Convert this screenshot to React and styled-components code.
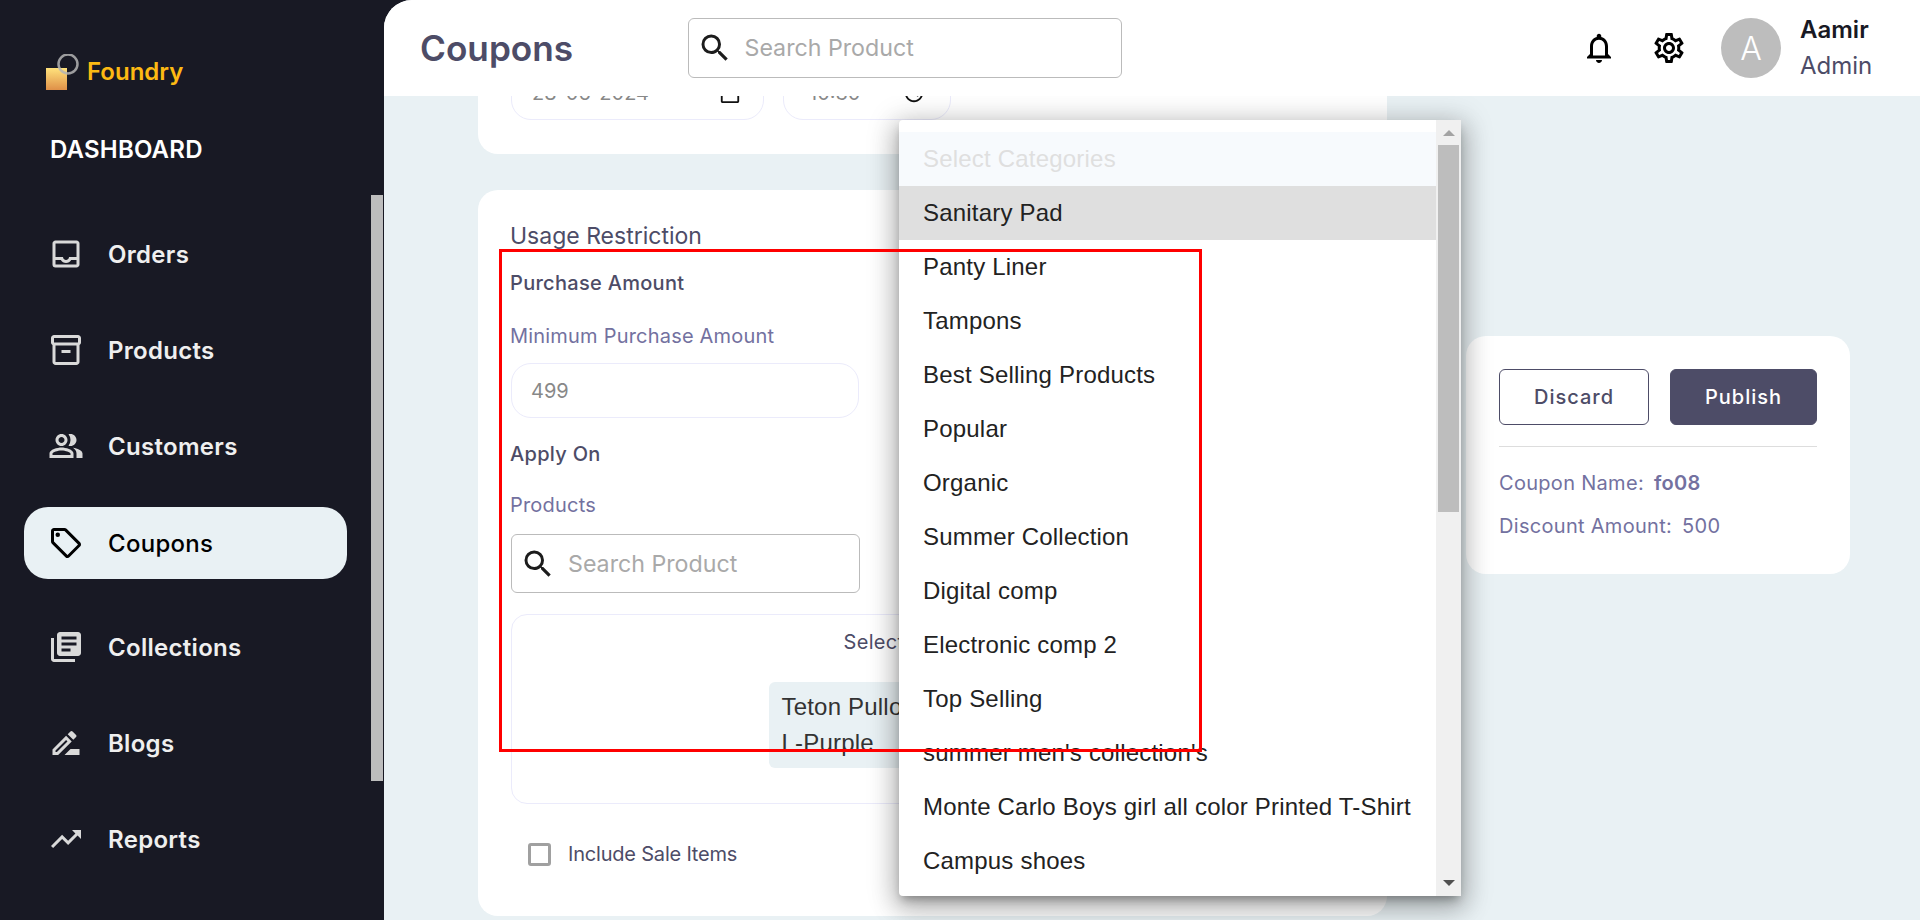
import React from 'react'
import styled, { createGlobalStyle } from 'styled-components'
import {
  MdOutlineInbox,
  MdOutlineInventory2,
  MdOutlinePeopleAlt,
  MdOutlineLocalOffer,
  MdLibraryBooks,
  MdOutlineDriveFileRenameOutline,
  MdTrendingUp,
  MdSearch,
  MdOutlineNotifications,
  MdOutlineSettings,
  MdOutlineCalendarToday,
  MdOutlineAccessTime,
} from 'react-icons/md'

const GlobalStyle = createGlobalStyle`
  html, body { margin: 0; padding: 0; height: 100%; overflow: hidden; background: #181924; }
  * { box-sizing: border-box; }
  body { font-family: Inter, "Noto Sans", sans-serif; }
`

const navItems = [
  { label: 'Orders', Icon: MdOutlineInbox },
  { label: 'Products', Icon: MdOutlineInventory2 },
  { label: 'Customers', Icon: MdOutlinePeopleAlt },
  { label: 'Coupons', Icon: MdOutlineLocalOffer, active: true },
  { label: 'Collections', Icon: MdLibraryBooks },
  { label: 'Blogs', Icon: MdOutlineDriveFileRenameOutline },
  { label: 'Reports', Icon: MdTrendingUp },
]

const categories = [
  'Sanitary Pad',
  'Panty Liner',
  'Tampons',
  'Best Selling Products',
  'Popular',
  'Organic',
  'Summer Collection',
  'Digital comp',
  'Electronic comp 2',
  'Top Selling',
  "summer men's collection's",
  'Monte Carlo Boys girl all color Printed T-Shirt',
  'Campus shoes',
]

function Logo() {
  return (
    <svg width="36" height="36" viewBox="0 0 36 36">
      <defs>
        <linearGradient id="logoFill" x1="0" y1="0" x2="0" y2="1">
          <stop offset="0" stopColor="#ffe27c" />
          <stop offset="1" stopColor="#df9048" />
        </linearGradient>
      </defs>
      <rect x="0" y="14" width="21" height="22" fill="url(#logoFill)" />
      <circle cx="22" cy="10" r="9.5" fill="none" stroke="#b4b4b4" strokeOpacity="0.85" strokeWidth="2.5" />
    </svg>
  )
}

export default function App() {
  return (
    <Page>
      <GlobalStyle />
      <Sidebar>
        <Brand>
          <Logo />
          <BrandName>Foundry</BrandName>
        </Brand>
        <SectionTitle>DASHBOARD</SectionTitle>
        <Nav>
          {navItems.map(({ label, Icon, active }) => (
            <NavItem key={label} $active={active}>
              <Icon size={36} />
              <span>{label}</span>
            </NavItem>
          ))}
        </Nav>
        <SideThumb />
      </Sidebar>

      <Main>
        <Header>
          <PageTitle>Coupons</PageTitle>
          <SearchBox $width={434} $height={60}>
            <MdSearch size={36} color="#1c1c1c" />
            <input placeholder="Search Product" />
          </SearchBox>
          <HeaderRight>
            <IconBtn><MdOutlineNotifications size={36} /></IconBtn>
            <IconBtn><MdOutlineSettings size={36} /></IconBtn>
            <Avatar>A</Avatar>
            <UserInfo>
              <UserName>Aamir</UserName>
              <UserRole>Admin</UserRole>
            </UserInfo>
          </HeaderRight>
        </Header>

        <Body>
          <FormColumn>
            <ScheduleCard>
              <DateField $width={253} $padLeft={20} $padRight={22}>
                <span>28-06-2024</span>
                <MdOutlineCalendarToday size={22} color="#111" />
              </DateField>
              <DateField $width={168} $padLeft={25} $padRight={25}>
                <span>10:30</span>
                <MdOutlineAccessTime size={22} color="#111" />
              </DateField>
            </ScheduleCard>

            <UsageCard>
              <CardTitle>Usage Restriction</CardTitle>
              <GroupTitle $top={20}>Purchase Amount</GroupTitle>
              <FieldLabel $top={29}>Minimum Purchase Amount</FieldLabel>
              <AmountInput readOnly value="499" />
              <GroupTitle $top={24}>Apply On</GroupTitle>
              <FieldLabel $top={27}>Products</FieldLabel>
              <SearchBox $width={349} $height={59} $top={17}>
                <MdSearch size={36} color="#1c1c1c" />
                <input placeholder="Search Product" />
              </SearchBox>
              <SelectedBox>
                <SelectedTitle>Selected Products</SelectedTitle>
                <Chip>Teton Pullover Hoodie<br />L-Purple</Chip>
              </SelectedBox>
              <CheckRow>
                <CheckBox />
                <span>Include Sale Items</span>
              </CheckRow>
            </UsageCard>
          </FormColumn>

          <SummaryCard>
            <ButtonRow>
              <OutlineBtn>Discard</OutlineBtn>
              <SolidBtn>Publish</SolidBtn>
            </ButtonRow>
            <Divider />
            <SummaryLine $top={24}>Coupon Name: <b>fo08</b></SummaryLine>
            <SummaryLine $top={19}>Discount Amount: <span>500</span></SummaryLine>
          </SummaryCard>
        </Body>
      </Main>

      <Dropdown>
        <OptionList>
          <Option $placeholder>Select Categories</Option>
          {categories.map((c, i) => (
            <Option key={c} $selected={i === 0}>{c}</Option>
          ))}
        </OptionList>
        <ListScroll>
          <ArrowUp />
          <ListThumb />
          <ArrowDown />
        </ListScroll>
      </Dropdown>

      <Highlight />
    </Page>
  )
}

const Page = styled.div`
  position: relative;
  display: flex;
  width: 1920px;
  height: 920px;
  overflow: hidden;
  background: #181924;
`

const Sidebar = styled.aside`
  position: relative;
  flex: 0 0 384px;
  padding: 54px 0 0 24px;
`

const Brand = styled.div`
  display: flex;
  align-items: center;
  gap: 5px;
  margin-left: 22px;
  height: 36px;
`

const BrandName = styled.div`
  padding-bottom: 2px;
  font-size: 24px;
  font-weight: 600;
  color: #fdb913;
`

const SectionTitle = styled.div`
  margin: 45px 0 0 26px;
  font-size: 24px;
  line-height: 30px;
  font-weight: 600;
  letter-spacing: 0.2px;
  color: #fff;
`

const Nav = styled.nav`
  display: flex;
  flex-direction: column;
  gap: 24px;
  margin-top: 53px;
`

const NavItem = styled.a`
  display: flex;
  align-items: center;
  gap: 24px;
  width: 323px;
  height: 72px;
  padding-left: 24px;
  border-radius: 24px;
  font-size: 24px;
  letter-spacing: 0.3px;
  font-weight: ${(p) => (p.$active ? 500 : 600)};
  background: ${(p) => (p.$active ? '#e9f1f4' : 'transparent')};
  color: ${(p) => (p.$active ? '#000' : '#efefef')};
  margin: ${(p) => (p.$active ? '1px 0 8px' : '0')};
  svg { color: ${(p) => (p.$active ? '#000' : '#d9d9d9')}; flex: none; }
`

const SideThumb = styled.div`
  position: absolute;
  left: 371px;
  top: 195px;
  width: 12px;
  height: 586px;
  background: #bdbdbd;
`

const Main = styled.main`
  flex: 1;
  display: flex;
  flex-direction: column;
  min-width: 0;
  background: #e9f1f4;
  border-top-left-radius: 28px;
  overflow: hidden;
`

const Header = styled.header`
  flex: 0 0 96px;
  display: flex;
  align-items: center;
  padding: 0 49px 0 36px;
  background: #fff;
  position: relative;
  z-index: 1;
`

const PageTitle = styled.h1`
  width: 267.5px;
  margin: 0;
  font-size: 35.2px;
  font-weight: 600;
  color: #4d4c67;
`

const SearchBox = styled.label`
  display: flex;
  align-items: center;
  gap: 10px;
  width: ${(p) => p.$width}px;
  height: ${(p) => p.$height}px;
  margin-top: ${(p) => p.$top || 0}px;
  padding-left: 8px;
  border: 1px solid #bbbbbb;
  border-radius: 6px;
  background: #fff;
  svg { flex: none; }
  input {
    flex: 1;
    min-width: 0;
    border: 0;
    outline: 0;
    background: transparent;
    font-family: inherit;
    font-size: 23.2px;
    color: #333;
  }
  input::placeholder { color: #a9a9a9; opacity: 1; }
`

const HeaderRight = styled.div`
  margin-left: auto;
  display: flex;
  align-items: center;
  gap: 34px;
`

const IconBtn = styled.div`
  display: flex;
  width: 36px;
  height: 36px;
  color: #000;
`

const Avatar = styled.div`
  display: flex;
  align-items: center;
  justify-content: center;
  width: 60px;
  height: 60px;
  border-radius: 50%;
  background: #bdbdbd;
  color: #fff;
  font-size: 32px;
  font-weight: 300;
`

const UserInfo = styled.div`
  width: 71px;
  margin-left: -15px;
`

const UserName = styled.div`
  font-size: 24px;
  line-height: 36px;
  font-weight: 600;
  color: #181924;
`

const UserRole = styled.div`
  font-size: 24px;
  line-height: 36px;
  color: #4d4c67;
`

const Body = styled.div`
  flex: 1;
  display: flex;
  align-items: flex-start;
  padding-left: 94px;
  min-height: 0;
`

const FormColumn = styled.div`
  flex: 0 0 909px;
  margin-top: -51px;
`

const ScheduleCard = styled.section`
  display: flex;
  gap: 19px;
  padding: 20px 33px 34px;
  background: #fff;
  border-radius: 20px;
`

const DateField = styled.div`
  display: flex;
  align-items: center;
  justify-content: space-between;
  width: ${(p) => p.$width}px;
  height: 55px;
  padding: 0 ${(p) => p.$padRight}px 0 ${(p) => p.$padLeft}px;
  border: 1px solid #ebebfb;
  border-radius: 20px;
  font-size: 20px;
  color: #888;
`

const UsageCard = styled.section`
  margin-top: 36px;
  padding: 31px 33px 50px;
  background: #fff;
  border-radius: 20px;
`

const CardTitle = styled.div`
  margin-left: -1px;
  font-size: 23px;
  line-height: 30px;
  color: #4d4c67;
`

const GroupTitle = styled.div`
  margin: ${(p) => p.$top}px 0 0 -1px;
  font-size: 20px;
  line-height: 24px;
  font-weight: 500;
  letter-spacing: 0.3px;
  color: #4d4c67;
`

const FieldLabel = styled.div`
  margin: ${(p) => p.$top}px 0 0 -1px;
  font-size: 20px;
  line-height: 24px;
  letter-spacing: 0.2px;
  color: #7371a0;
`

const AmountInput = styled.input`
  display: block;
  width: 348px;
  height: 55px;
  margin-top: 15px;
  padding: 0 19px;
  border: 1px solid #ebebfb;
  border-radius: 20px;
  outline: 0;
  font-family: inherit;
  font-size: 20px;
  color: #888;
`

const SelectedBox = styled.div`
  display: flex;
  flex-direction: column;
  align-items: center;
  height: 190px;
  margin-top: 21px;
  padding-top: 15px;
  border: 1px solid #ebebfb;
  border-radius: 16px;
`

const SelectedTitle = styled.div`
  font-size: 20px;
  line-height: 24px;
  letter-spacing: 0.3px;
  color: #4d4c67;
`

const Chip = styled.div`
  width: 328px;
  margin-top: 28px;
  padding: 7px 13px;
  background: #e9f1f4;
  border-radius: 6px;
  font-family: "Liberation Sans", Arial, sans-serif;
  font-size: 24px;
  line-height: 36px;
  letter-spacing: 0.2px;
  color: #333;
`

const CheckRow = styled.label`
  display: flex;
  align-items: center;
  gap: 17px;
  margin-top: 39px;
  padding-left: 17px;
  font-size: 20px;
  line-height: 23px;
  letter-spacing: -0.2px;
  color: #4d4c67;
`

const CheckBox = styled.div`
  width: 23px;
  height: 23px;
  border: 3px solid #a0a0a0;
  border-radius: 3px;
`

const SummaryCard = styled.aside`
  width: 384px;
  margin: 240px 0 0 79px;
  padding: 33px 33px 36px;
  background: #fff;
  border-radius: 20px;
`

const ButtonRow = styled.div`
  display: flex;
  justify-content: space-between;
`

const OutlineBtn = styled.button`
  width: 150px;
  height: 56px;
  border: 1px solid #4d4c67;
  border-radius: 6px;
  background: #fff;
  font-family: inherit;
  font-size: 20px;
  font-weight: 500;
  letter-spacing: 1px;
  color: #4d4c67;
`

const SolidBtn = styled(OutlineBtn)`
  width: 147px;
  background: #4d4c67;
  color: #fff;
`

const Divider = styled.div`
  height: 1px;
  margin-top: 21px;
  background: #dddddd;
`

const SummaryLine = styled.div`
  margin-top: ${(p) => p.$top}px;
  font-size: 20px;
  line-height: 24px;
  letter-spacing: 0.3px;
  color: #7371a0;
  b, span { margin-left: 4px; }
  b { font-weight: 600; }
`

const Dropdown = styled.div`
  position: absolute;
  left: 899px;
  top: 120px;
  width: 562px;
  height: 776px;
  display: flex;
  background: #fff;
  border-radius: 4px 0 0 4px;
  box-shadow: 0 6px 10px -3px rgba(0, 0, 0, 0.3), 0 10px 24px 3px rgba(0, 0, 0, 0.22), 0 4px 30px 6px rgba(0, 0, 0, 0.14);
  font-family: "Liberation Sans", Arial, sans-serif;
`

const OptionList = styled.div`
  flex: 1;
  min-width: 0;
  padding-top: 12px;
`

const Option = styled.div`
  height: 54px;
  padding-left: 24px;
  font-size: 24px;
  line-height: 54px;
  letter-spacing: 0.2px;
  white-space: nowrap;
  color: ${(p) => (p.$placeholder ? '#dfdfdf' : '#222')};
  background: ${(p) => (p.$selected ? '#dfdfdf' : p.$placeholder ? '#f7fafd' : 'transparent')};
`

const ListScroll = styled.div`
  flex: 0 0 25px;
  display: flex;
  flex-direction: column;
  align-items: center;
  background: #f0f0f0;
`

const ArrowUp = styled.div`
  margin-top: 10px;
  border-left: 6px solid transparent;
  border-right: 6px solid transparent;
  border-bottom: 6px solid #a3a3a3;
`

const ListThumb = styled.div`
  width: 21px;
  height: 367px;
  margin-top: 9px;
  background: #bdbdbd;
`

const ArrowDown = styled.div`
  margin-top: auto;
  margin-bottom: 10px;
  border-left: 6px solid transparent;
  border-right: 6px solid transparent;
  border-top: 6px solid #505050;
`

const Highlight = styled.div`
  position: absolute;
  left: 499px;
  top: 249px;
  width: 703px;
  height: 503px;
  border: 3px solid #ff0000;
  pointer-events: none;
`
